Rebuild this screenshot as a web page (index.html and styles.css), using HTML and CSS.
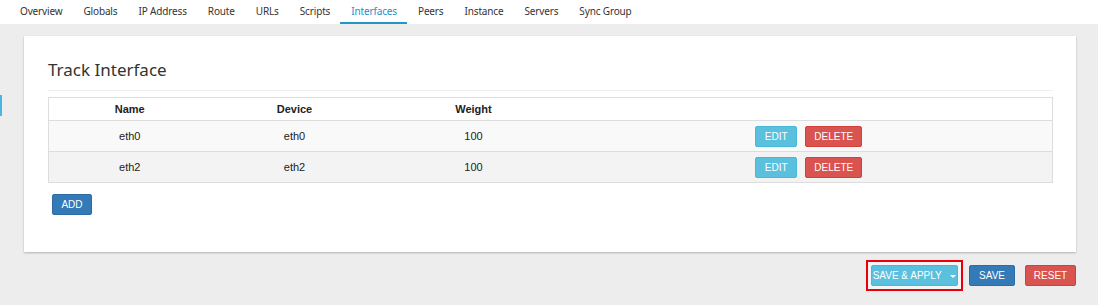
FILE: index.html
```html
<!DOCTYPE html>
<html lang="en">
<head>
    <meta charset="UTF-8">
    <title>Track Interface</title>
    <link rel="stylesheet" href="styles.css">
</head>
<body>
    <nav class="tabs">
        <a class="tab">Overview</a>
        <a class="tab">Globals</a>
        <a class="tab">IP Address</a>
        <a class="tab">Route</a>
        <a class="tab">URLs</a>
        <a class="tab">Scripts</a>
        <a class="tab active">Interfaces</a>
        <a class="tab">Peers</a>
        <a class="tab">Instance</a>
        <a class="tab">Servers</a>
        <a class="tab">Sync Group</a>
    </nav>

    <div class="side-mark"></div>

    <main class="page">
        <section class="card">
            <h3 class="card-title">Track Interface</h3>
            <table class="grid">
                <thead>
                    <tr>
                        <th class="col-name">Name</th>
                        <th class="col-device">Device</th>
                        <th class="col-weight">Weight</th>
                        <th></th>
                    </tr>
                </thead>
                <tbody>
                    <tr>
                        <td>eth0</td>
                        <td>eth0</td>
                        <td>100</td>
                        <td class="actions">
                            <button class="btn btn-info">EDIT</button>
                            <button class="btn btn-danger">DELETE</button>
                        </td>
                    </tr>
                    <tr>
                        <td>eth2</td>
                        <td>eth2</td>
                        <td>100</td>
                        <td class="actions">
                            <button class="btn btn-info">EDIT</button>
                            <button class="btn btn-danger">DELETE</button>
                        </td>
                    </tr>
                </tbody>
            </table>
            <button class="btn btn-primary btn-add">ADD</button>
        </section>

        <div class="page-actions">
            <span class="highlight">
                <button class="btn btn-info btn-apply">SAVE &amp; APPLY <span class="caret"></span></button>
            </span>
            <button class="btn btn-primary btn-save">SAVE</button>
            <button class="btn btn-danger btn-reset">RESET</button>
        </div>
    </main>
</body>
</html>
```

FILE: styles.css
```css
* {
    box-sizing: border-box;
}
body {
    margin: 0;
    background: #ededed;
    font-family: "Liberation Sans", Arial, sans-serif;
    color: #333;
}
.tabs {
    display: flex;
    height: 24px;
    padding-left: 9px;
    background: #fff;
}
.tab {
    padding: 0 10px 0 11px;
    height: 24px;
    line-height: 23px;
    font-family: "Noto Sans", sans-serif;
    font-size: 10px;
    letter-spacing: -0.15px;
    color: #333;
    border-bottom: 2px solid transparent;
}
.tab.active {
    color: #1f8fc9;
    border-bottom-color: #2196c9;
}
.side-mark {
    position: absolute;
    left: 0;
    top: 95px;
    width: 2px;
    height: 21px;
    background: #4cb6e0;
}
.page {
    padding: 12px 22px 0 24px;
}
.card {
    background: #fff;
    padding: 18px 23px 37px 24px;
    box-shadow: 0 1px 2px rgba(0, 0, 0, 0.25);
}
.card-title {
    margin: 0;
    height: 37px;
    line-height: 32px;
    font-family: "Noto Sans", sans-serif;
    font-size: 17px;
    font-weight: normal;
    color: #333;
    border-bottom: 1px solid #eee;
}
.grid {
    width: 100%;
    margin-top: 6px;
    border-collapse: collapse;
    border: 1px solid #ddd;
    font-size: 11px;
    color: #222;
}
.grid th {
    height: 23px;
    font-weight: bold;
    border-bottom: 1px solid #ddd;
}
.grid td {
    height: 31px;
    text-align: center;
    border-top: 1px solid #ddd;
}
.grid tbody tr:nth-child(1) {
    background: #f9f9f9;
}
.grid tbody tr:nth-child(2) {
    background: #f3f3f3;
}
.col-name {
    width: 162px;
}
.col-device {
    width: 168px;
}
.col-weight {
    width: 190px;
}
.grid td.actions {
    padding-right: 4px;
    font-size: 0;
}
.btn {
    height: 21px;
    padding: 0 8px;
    border: 1px solid transparent;
    border-radius: 2px;
    font-family: "Liberation Sans", Arial, sans-serif;
    font-size: 10px;
    white-space: nowrap;
    color: #fff;
    cursor: pointer;
    vertical-align: middle;
}
.btn-info {
    background: #5bc0de;
    border-color: #46b8da;
}
.btn-danger {
    background: #d9534f;
    border-color: #d43f3a;
}
.btn-primary {
    background: #337ab7;
    border-color: #2e6da4;
}
.actions .btn-info {
    width: 42px;
    margin-right: 8px;
}
.actions .btn-danger {
    width: 57px;
}
.btn-add {
    width: 40px;
    margin: 11px 0 0 4px;
    padding: 0;
}
.page-actions {
    display: flex;
    justify-content: flex-end;
    align-items: center;
    margin-top: 8px;
}
.highlight {
    display: flex;
    padding: 3px;
    border: 2px solid #e8000b;
    background: #f5f5f5;
}
.btn-apply {
    width: 87px;
    padding: 0;
}
.caret {
    display: inline-block;
    margin-left: 6px;
    vertical-align: middle;
    border-top: 3px solid #fff;
    border-left: 3px solid transparent;
    border-right: 3px solid transparent;
}
.btn-save {
    width: 46px;
    margin-left: 6px;
    padding: 0;
}
.btn-reset {
    width: 51px;
    margin-left: 10px;
    padding: 0;
}
```
